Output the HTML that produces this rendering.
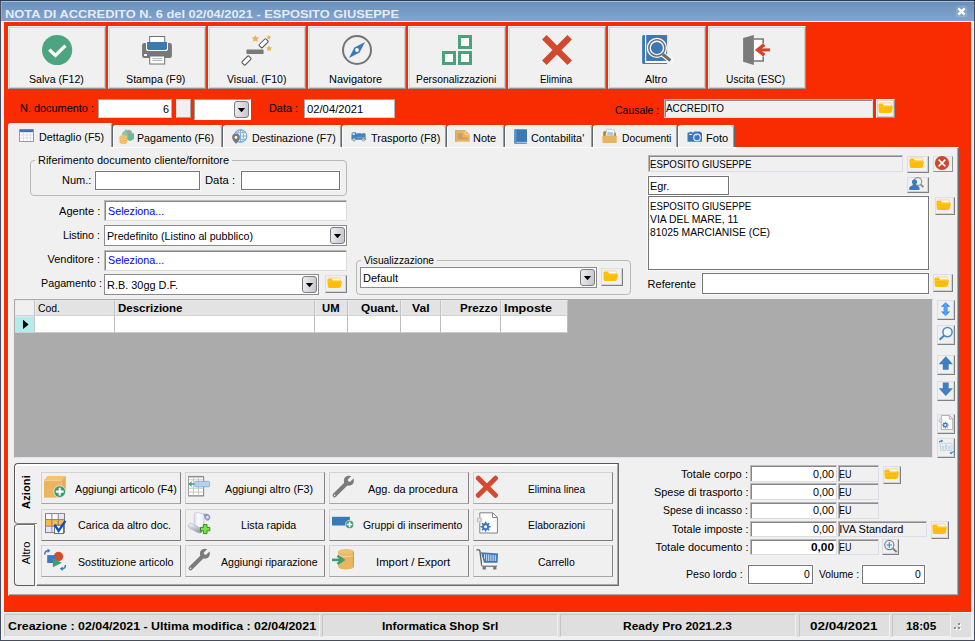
<!DOCTYPE html>
<html><head><meta charset="utf-8"><title>Nota di accredito</title>
<style>
html,body{margin:0;padding:0}
body{width:975px;height:641px;position:relative;overflow:hidden;background:#f82c00;font-family:"Liberation Sans",sans-serif;font-size:11px}
body div,body svg{position:absolute;box-sizing:border-box}
.t{white-space:nowrap;line-height:14px;height:14px;transform-origin:0 0}

.tb{background:#f0f0f0;border-top:1px solid #f0f8fa;border-left:1px solid #f0f8fa;border-right:1px solid #8c9698;border-bottom:1px solid #8c9698;box-shadow:inset -1px -1px 0 #cfd2d3,inset 1px 1px 0 #d6d6dc}
.btn{background:#f0f0f0;border-top:1px solid #dcdee6;border-left:1px solid #dcdee6;border-right:1px solid #7e8286;border-bottom:1px solid #7e8286;box-shadow:inset -1px -1px 0 #d4d4d6}
.btn2{background:#f0f0f0;border-top:1px solid #dcdee6;border-left:1px solid #dcdee6;border-right:1px solid #8e9296;border-bottom:1px solid #8e9296}
.ab{background:#f0f0f0;border-top:1px solid #d2d2d8;border-left:1px solid #d2d2d8;border-right:1px solid #848484;border-bottom:1px solid #a4a4a4}
.in{background:#fff;border-top:1px solid #b8b8b8;border-left:1px solid #b8b8b8;border-right:1px solid #dcdce0;border-bottom:1px solid #dcdce0;box-shadow:inset 1px 1px 0 #868686}
.in2{background:#fff;border:1px solid;border-color:#9e9e9e #b4b4b4 #d4d4d4 #a6a6a6}
.ro{background:#f0f0f0;border-top:1px solid #b4b4b4;border-left:1px solid #b4b4b4;border-right:1px solid #dcdce6;border-bottom:1px solid #dcdce6;box-shadow:inset 1px 1px 0 #8a8a8a}
.fl{background:#fff;border:1px solid #767676;box-shadow:0 0 0 1px rgba(255,255,255,.6)}
.cb{background:#fff;border:1px solid #8c8c8c}
.dd{background:linear-gradient(100deg,#eeeef2,#c4c4cc);border:1px solid #7c7c7c;border-radius:3px}
.dd:after{content:"";position:absolute;left:2.7px;top:5.8px;width:7.6px;height:4.4px;background:#000;clip-path:polygon(0 0,100% 0,50% 100%)}
.gb{border:1px solid #b8b8b8;border-radius:4px}
.tab{background:#f0f0f0;border-top:1px solid #fff;border-left:1px solid #fff;border-right:1px solid #5e6a70;border-radius:3px 3px 0 0;box-shadow:inset -1px 0 0 #98a0a4}
.sp{background:#dfdfdf;border-top:1px solid #c6c6c6;border-left:1px solid #c6c6c6;border-right:1px solid #f2f2f2;border-bottom:1px solid #f2f2f2}
.hc{background:#e3e3e3;border-right:1px solid #c2c2c6;border-bottom:1px solid #d2d2d2;border-top:1px solid #e8e8e8;border-left:1px solid #ececec}
.gc{background:#fff;border-right:1px solid #bebebe;border-bottom:1px solid #cacaca}

</style></head><body>
<div class="" style="left:0px;top:0px;width:975px;height:641px;background:#464e5d;border-top:1px solid #2b3d55"></div>
<div class="" style="left:1px;top:1px;width:973px;height:639px;background:#f0f0f0"></div>
<div class="" style="left:1px;top:1px;width:973px;height:20px;background:linear-gradient(#6a90bc,#81a5cd);border-top:1px solid #a8c1dd;border-left:1px solid #8fadd0"></div>
<div class="" style="left:4px;top:22px;width:967px;height:590px;background:#f82c00"></div>
<div class="t" style="left:4.50px;top:6.62px;font-size:11.5px;color:#e6ebf2;transform:scaleX(1.1176);font-weight:bold;">NOTA DI ACCREDITO N. 6 del 02/04/2021 - ESPOSITO GIUSEPPE</div>
<div class="" style="left:956px;top:6px;width:11px;height:11px;background:rgba(255,255,255,.07);border:1px solid rgba(255,255,255,.13);border-radius:1px"></div>
<svg style="left:956px;top:6px" width="12" height="12" viewBox="956 6 12 12"><path d="M958.3 8.3 L964.7 14.7 M964.7 8.3 L958.3 14.7" stroke="#fff" stroke-width="2.4"/></svg>
<div class="tb" style="left:8px;top:26px;width:98px;height:63px;"></div>
<div class="t" style="left:28.60px;top:72.19px;font-size:11px;color:#000;transform:scaleX(0.9640);">Salva (F12)</div>
<svg style="left:40px;top:32px" width="36" height="36" viewBox="40 32 36 36"><circle cx="57.1" cy="50" r="15.1" fill="#4ca57f"/><path d="M49.3 49.6 L55.4 55.4 L65.4 45.6" fill="none" stroke="#fff" stroke-width="3.3"/></svg>
<div class="tb" style="left:108px;top:26px;width:98px;height:63px;"></div>
<div class="t" style="left:126.00px;top:72.19px;font-size:11px;color:#000;transform:scaleX(0.9718);">Stampa (F9)</div>
<svg style="left:140px;top:32px" width="36" height="36" viewBox="140 32 36 36"><rect x="149.7" y="36.5" width="15" height="7" fill="#fff" stroke="#707070" stroke-width="1"/><rect x="142.1" y="43" width="29.8" height="15" rx="2.2" fill="#787878"/><path d="M146 42 H168 V49 Q168 51 166 51 H148 Q146 51 146 49 Z" fill="#fbfbfb"/><path d="M147 42 H167 V48.5 L165.6 50 H148.4 L147 48.5 Z" fill="#3e79b4"/><rect x="144" y="54" width="3" height="2" rx=".6" fill="#fff"/><rect x="149.7" y="56" width="15" height="8" fill="#fff" stroke="#707070" stroke-width="1"/><path d="M152.3 58.6 H162 M152.3 60.6 H162" stroke="#b0b0b0" stroke-width="1"/></svg>
<div class="tb" style="left:208px;top:26px;width:98px;height:63px;"></div>
<div class="t" style="left:227.00px;top:72.19px;font-size:11px;color:#000;transform:scaleX(0.9558);">Visual. (F10)</div>
<svg style="left:240px;top:32px" width="36" height="36" viewBox="240 32 36 36"><rect x="246.4" y="49.6" width="17.2" height="4.5" rx=".8" fill="#7a7a7a"/><g transform="rotate(-45 263.6 43.3)"><rect x="258.9" y="41.1" width="9.4" height="4.4" rx=".8" fill="#fff" stroke="#4d4d4d" stroke-width="1"/></g><g transform="rotate(-45 246.5 60.5)"><rect x="241.8" y="58.3" width="9.4" height="4.4" rx=".8" fill="#fff" stroke="#4d4d4d" stroke-width="1"/></g><polygon points="255.40,34.90 256.59,37.16 259.11,37.59 257.33,39.43 257.69,41.96 255.40,40.83 253.11,41.96 253.47,39.43 251.69,37.59 254.21,37.16" fill="#f0b254"/><polygon points="268.80,34.90 269.56,36.35 271.18,36.63 270.04,37.80 270.27,39.42 268.80,38.70 267.33,39.42 267.56,37.80 266.42,36.63 268.04,36.35" fill="#f0b254"/><polygon points="269.10,45.30 270.08,47.15 272.14,47.51 270.68,49.01 270.98,51.09 269.10,50.16 267.22,51.09 267.52,49.01 266.06,47.51 268.12,47.15" fill="#f0b254"/></svg>
<div class="tb" style="left:308px;top:26px;width:98px;height:63px;"></div>
<div class="t" style="left:329.00px;top:72.19px;font-size:11px;color:#000;">Navigatore</div>
<svg style="left:340px;top:32px" width="36" height="36" viewBox="340 32 36 36"><circle cx="357" cy="50" r="14" fill="none" stroke="#747474" stroke-width="2"/><path d="M365 42 L359.6 52.4 L349 58 L354.4 47.6 Z" fill="#3b78bd"/><circle cx="357" cy="50" r="1.9" fill="#fff"/></svg>
<div class="tb" style="left:408px;top:26px;width:98px;height:63px;"></div>
<div class="t" style="left:416.30px;top:72.19px;font-size:11px;color:#000;transform:scaleX(0.9381);">Personalizzazioni</div>
<svg style="left:440px;top:32px" width="36" height="36" viewBox="440 32 36 36"><g fill="#fdfdfd" stroke="#4ca27d" stroke-width="3"><rect x="459.5" y="36.5" width="11" height="11"/><rect x="443.5" y="52.5" width="11" height="11"/><rect x="459.5" y="52.5" width="11" height="11"/></g></svg>
<div class="tb" style="left:508px;top:26px;width:98px;height:63px;"></div>
<div class="t" style="left:540.40px;top:72.19px;font-size:11px;color:#000;transform:scaleX(0.8956);">Elimina</div>
<svg style="left:540px;top:32px" width="36" height="36" viewBox="540 32 36 36"><path d="M544.3 37.3 L569.7 62.7 M569.7 37.3 L544.3 62.7" stroke="#d04a2f" stroke-width="6.4"/></svg>
<div class="tb" style="left:608px;top:26px;width:98px;height:63px;"></div>
<div class="t" style="left:644.70px;top:72.19px;font-size:11px;color:#000;">Altro</div>
<svg style="left:640px;top:32px" width="36" height="36" viewBox="640 32 36 36"><path d="M643.6 35 H667.1 V64.1 H643.6 Q642.1 64.1 642.1 62.6 V36.5 Q642.1 35 643.6 35 Z" fill="#3d78b6"/><path d="M645.6 35 V61.9" fill="none" stroke="#fafafa" stroke-width="1.2"/><path d="M645 62 H667.1" fill="none" stroke="#fafafa" stroke-width="2.1"/><path d="M662.6 54.2 L670.6 60.6" stroke="#fafafa" stroke-width="5.4" stroke-linecap="round"/><circle cx="656.9" cy="47.9" r="8.1" fill="#3d78b6" stroke="#fafafa" stroke-width="4.2"/><circle cx="656.9" cy="47.9" r="8.1" fill="none" stroke="#6e6e6e" stroke-width="1.5"/><path d="M662.8 54.3 L670.4 60.5" stroke="#6e6e6e" stroke-width="3.1"/></svg>
<div class="tb" style="left:708px;top:26px;width:98px;height:63px;"></div>
<div class="t" style="left:726.40px;top:72.19px;font-size:11px;color:#000;transform:scaleX(0.9298);">Uscita (ESC)</div>
<svg style="left:740px;top:32px" width="36" height="36" viewBox="740 32 36 36"><rect x="754" y="38.4" width="9.9" height="23.3" fill="#fff"/><path d="M754 39.1 H763.2 V43.6 M763.2 56.4 V60.9 H754" fill="none" stroke="#757575" stroke-width="1.5"/><path d="M743.1 38 L753.9 35 V64.9 L743.1 61.8 Z" fill="#7a7a7a"/><path d="M757.5 49.9 H770.1" stroke="#d6432a" stroke-width="3"/><path d="M764.3 44.6 L757.6 49.9 L764.3 55.2" fill="none" stroke="#d6432a" stroke-width="3.4"/></svg>
<div class="t" style="left:20.00px;top:101.19px;font-size:11px;color:#000;transform:scaleX(0.9921);">N. documento :</div>
<div class="in2" style="left:98px;top:99px;width:74px;height:19px;"></div>
<div class="t" style="left:163.00px;top:102.19px;font-size:11px;color:#000;transform:scaleX(0.9809);">6</div>
<div class="btn" style="left:176px;top:99px;width:15px;height:19px;border-color:#e0e0e0 #a4a4a4 #a4a4a4 #e0e0e0;box-shadow:none"></div>
<div class="cb" style="left:194px;top:99px;width:57px;height:21px;border-color:#9c9c9c #fff #fff #9c9c9c;box-shadow:none"></div>
<div class="dd" style="left:234px;top:101px;width:15px;height:17px;"></div>
<div class="t" style="left:269.00px;top:101.19px;font-size:11px;color:#000;transform:scaleX(0.9882);">Data :</div>
<div class="in2" style="left:304px;top:99px;width:91px;height:19px;"></div>
<div class="t" style="left:306.75px;top:102.19px;font-size:11px;color:#000;transform:scaleX(1.0218);">02/04/2021</div>
<div class="t" style="left:614.80px;top:103.19px;font-size:11px;color:#000;transform:scaleX(0.9512);">Causale :</div>
<div class="ro" style="left:664px;top:99px;width:209px;height:19px;"></div>
<div class="t" style="left:666.00px;top:101.19px;font-size:11px;color:#000;transform:scaleX(0.8981);">ACCREDITO</div>
<div class="tb" style="left:876px;top:99px;width:19px;height:19px;"></div>
<svg style="left:878.4px;top:101.7px" width="16" height="12" viewBox="0 0 16 12"><path d="M1 1.6 Q1 .3 2.3 .3 H12.4 Q13.7 .3 13.7 1.6 V5 H1 Z" fill="#ffd79e"/><path d="M5.4 1.6 H12.8 V4.4 H5.4 Z" fill="#fff"/><path d="M.4 3 Q.4 1.9 1.5 1.9 H4.1 Q4.8 1.9 5.2 2.5 L5.9 3.6 H13.4 Q15 3.6 14.8 5.2 L13.9 9.6 Q13.6 11 12.2 11 H2.3 Q1 11 .8 9.7 Z" fill="#ffbd05"/><path d="M1.2 4.4 H13.8" stroke="#ffc933" stroke-width=".8"/></svg>
<div class="tab" style="left:8px;top:123px;width:105px;height:25px;"></div>
<div class="t" style="left:39.00px;top:130.19px;font-size:11px;color:#000;transform:scaleX(0.9756);">Dettaglio (F5)</div>
<svg style="left:18px;top:128px" width="18" height="16" viewBox="18 128 18 16"><rect x="19.5" y="129.5" width="14" height="12" fill="#fff" stroke="#9a9a9a"/><rect x="20" y="129.6" width="13" height="2.6" fill="#3a74b5"/><path d="M20 135 H33 M20 138 H33 M23.5 132 V141 M27 132 V141 M30.5 132 V141" stroke="#dcdcdc" stroke-width="1"/></svg>
<div class="tab" style="left:113px;top:125px;width:110px;height:22px;"></div>
<div class="t" style="left:137.00px;top:131.19px;font-size:11px;color:#000;transform:scaleX(0.9689);">Pagamento (F6)</div>
<svg style="left:117px;top:127px" width="20" height="18" viewBox="117 127 20 18"><path d="M122 133 L126 129.3 L130 131.5 L134 134 V139 L130 141 L122.5 137 Z" fill="#86c9ad"/><path d="M126.2 131.6 L129.3 129.6 L132.2 131.4 L129.4 136 Z" fill="#9a9a9a" opacity=".75"/><path d="M127.6 134.5 L134 133.2 V139 L130 141 L127.6 139.7 Z" fill="#69b896"/><path d="M119.5 137 V141.5 A3.9 2.3 0 0 0 127.3 141.5 V137 Z" fill="#eeb04e"/><ellipse cx="123.4" cy="137" rx="3.9" ry="2.1" fill="#f4c068"/><path d="M120.3 139.4 Q123.4 141 126.6 139.4 M120.3 141.6 Q123.4 143.2 126.6 141.6" stroke="#f8dca0" stroke-width=".8" fill="none"/></svg>
<div class="tab" style="left:223px;top:125px;width:119px;height:22px;"></div>
<div class="t" style="left:251.50px;top:131.19px;font-size:11px;color:#000;transform:scaleX(0.9642);">Destinazione (F7)</div>
<svg style="left:230px;top:128px" width="20" height="18" viewBox="230 128 20 18"><circle cx="240.5" cy="136" r="6.3" fill="#f4f8fd" stroke="#6fa3d8" stroke-width="1.1"/><path d="M234.3 136 H246.7 M240.5 129.8 V142.2 M235.3 132.7 H245.7 M235.3 139.3 H245.7" stroke="#7aaade" stroke-width=".9"/><ellipse cx="240.5" cy="136" rx="3.1" ry="6.2" fill="none" stroke="#7aaade" stroke-width=".9"/><path d="M236 143.8 Q232.1 139.6 232.1 137.4 A3.9 3.9 0 0 1 239.9 137.4 Q239.9 139.6 236 143.8 Z" fill="#7a7a7a"/><circle cx="236" cy="137.4" r="1.35" fill="#fff"/></svg>
<div class="tab" style="left:342px;top:125px;width:105px;height:22px;"></div>
<div class="t" style="left:370.70px;top:131.19px;font-size:11px;color:#000;transform:scaleX(0.9917);">Trasporto (F8)</div>
<svg style="left:350px;top:130px" width="18" height="12" viewBox="350 130 18 12"><path d="M351.5 134.2 Q351.5 132.3 353.4 132.3 H355.2 Q356.4 132.3 356.4 133.5 V134 H357 V133.3 H361.3 V134 H361.9 V133.3 H365.3 V134 H365.6 V138.2 Q366.3 138.4 366.3 139 Q366.3 139.8 365.6 139.8 H351.9 Q351.4 139.8 351.4 139.2 Z" fill="#4481c0"/><ellipse cx="353.7" cy="134.1" rx="1.4" ry=".8" fill="#fff"/><path d="M356.7 137.4 H365.4" stroke="#8fb6df" stroke-width=".7"/><circle cx="354" cy="139.6" r="1.5" fill="#c8c8c8" stroke="#8a8a8a" stroke-width=".6"/><circle cx="363.5" cy="139.6" r="1.5" fill="#c8c8c8" stroke="#8a8a8a" stroke-width=".6"/></svg>
<div class="tab" style="left:447px;top:125px;width:58px;height:22px;"></div>
<div class="t" style="left:473.20px;top:131.19px;font-size:11px;color:#000;transform:scaleX(0.9942);">Note</div>
<svg style="left:454px;top:129px" width="18" height="14" viewBox="454 129 18 14"><path d="M455.4 130.4 H465.6 L469.8 134.3 V141.8 H455.4 Z" fill="#edb55c"/><path d="M455.7 130.4 V141.8" stroke="#b8955a" stroke-width=".7"/><path d="M455.4 130.6 H465.6" stroke="#b8955a" stroke-width=".6"/><path d="M465.3 130.6 V134.5 H469.6" fill="none" stroke="#f6d9a4" stroke-width=".9"/><path d="M457.6 133.3 H462.6 V137.4 H467.6 V139.6 H457.6 Z" fill="#c3a068"/></svg>
<div class="tab" style="left:505px;top:125px;width:88px;height:22px;"></div>
<div class="t" style="left:531.40px;top:131.19px;font-size:11px;color:#000;transform:scaleX(0.9838);">Contabilita'</div>
<svg style="left:513px;top:128px" width="16" height="17" viewBox="513 128 16 17"><rect x="514.3" y="129.2" width="12.7" height="14.6" rx=".8" fill="#3d78b3"/><rect x="514.4" y="129.6" width="2.1" height="13.8" fill="#5e92c6"/><path d="M516.4 142.4 H527" stroke="#a9c3de" stroke-width="1.1"/></svg>
<div class="tab" style="left:593px;top:125px;width:85px;height:22px;"></div>
<div class="t" style="left:621.50px;top:131.19px;font-size:11px;color:#000;transform:scaleX(0.9377);">Documenti</div>
<svg style="left:601px;top:128px" width="18" height="16" viewBox="601 128 18 16"><path d="M603.3 132 Q603.3 131.2 604.2 131.2 H606 L606.6 132.4 H615 Q615.9 132.4 615.9 133.3 V136.5 H603.3 Z" fill="#a38632"/><g transform="rotate(9 610 132.5)"><rect x="606.2" y="129.5" width="8.2" height="7" rx=".8" fill="#fdfdfd" stroke="#a8a8a8" stroke-width=".6"/><rect x="607.4" y="131.8" width="5.8" height="4" fill="#aac8e8"/></g><rect x="602.4" y="135.8" width="14.4" height="7.1" rx=".6" fill="#e9b45f"/></svg>
<div class="tab" style="left:678px;top:125px;width:57px;height:22px;"></div>
<div class="t" style="left:706.00px;top:131.19px;font-size:11px;color:#000;transform:scaleX(1.0132);">Foto</div>
<svg style="left:686px;top:130px" width="18" height="13" viewBox="686 130 18 13"><path d="M687.5 133.4 Q687.5 132.6 688.3 132.6 H689.6 L690.2 131.7 H691.5 L692.1 132.6 H693.5 L694.6 131.4 H700 L701.2 132.6 Q702 132.8 702 133.6 V141.8 H687.5 Z" fill="#3b77b5"/><circle cx="697" cy="137.4" r="3.3" fill="none" stroke="#e6eef7" stroke-width="1.1"/><path d="M695.4 136 L697 134.9" stroke="#c8daee" stroke-width=".7"/><ellipse cx="690.6" cy="134.4" rx="1.5" ry=".6" fill="#fff"/></svg>
<div class="" style="left:8px;top:147px;width:951px;height:449px;background:#f0f0f0;border-top:1px solid #fff;border-left:1px solid #fff;border-right:1px solid #6a6e70;border-bottom:1px solid #6a6e70;box-shadow:inset -1px -1px 0 #a8a8a8"></div>
<div class="" style="left:9px;top:146px;width:102px;height:3px;background:#f0f0f0"></div>
<div class="gb" style="left:30px;top:160px;width:317px;height:36px;"></div>
<div class="" style="left:35px;top:154px;width:197px;height:14px;background:#f0f0f0"></div>
<div class="t" style="left:38.00px;top:153.19px;font-size:11px;color:#000;transform:scaleX(0.9949);">Riferimento documento cliente/fornitore</div>
<div class="t" style="left:62.00px;top:173.19px;font-size:11px;color:#000;">Num.:</div>
<div class="fl" style="left:95px;top:171px;width:105px;height:19px;"></div>
<div class="t" style="left:205.00px;top:173.19px;font-size:11px;color:#000;transform:scaleX(1.0223);">Data :</div>
<div class="fl" style="left:241px;top:171px;width:99px;height:19px;"></div>
<div class="t" style="left:58.75px;top:204.19px;font-size:11px;color:#000;transform:scaleX(1.0068);">Agente :</div>
<div class="in" style="left:104px;top:200px;width:243px;height:21px;"></div>
<div class="t" style="left:107.60px;top:204.19px;font-size:11px;color:#0000ff;transform:scaleX(0.9769);">Seleziona...</div>
<div class="t" style="left:63.00px;top:228.19px;font-size:11px;color:#000;transform:scaleX(0.9761);">Listino :</div>
<div class="cb" style="left:104px;top:225px;width:243px;height:21px;"></div>
<div class="t" style="left:107.00px;top:228.69px;font-size:11px;color:#000;transform:scaleX(0.9707);">Predefinito (Listino al pubblico)</div>
<div class="dd" style="left:330px;top:227px;width:15px;height:17px;"></div>
<div class="t" style="left:47.50px;top:252.19px;font-size:11px;color:#000;">Venditore :</div>
<div class="in" style="left:104px;top:250px;width:243px;height:21px;"></div>
<div class="t" style="left:107.60px;top:253.19px;font-size:11px;color:#0000ff;transform:scaleX(0.9769);">Seleziona...</div>
<div class="t" style="left:41.00px;top:276.19px;font-size:11px;color:#000;transform:scaleX(0.9780);">Pagamento :</div>
<div class="cb" style="left:104px;top:274px;width:215px;height:21px;"></div>
<div class="t" style="left:107.00px;top:277.69px;font-size:11px;color:#000;transform:scaleX(0.9926);">R.B. 30gg D.F.</div>
<div class="dd" style="left:302px;top:276px;width:15px;height:17px;"></div>
<div class="btn" style="left:325px;top:275px;width:22px;height:18px;"></div>
<svg style="left:326.9px;top:276.8px" width="16" height="12" viewBox="0 0 16 12"><path d="M1 1.6 Q1 .3 2.3 .3 H12.4 Q13.7 .3 13.7 1.6 V5 H1 Z" fill="#ffd79e"/><path d="M5.4 1.6 H12.8 V4.4 H5.4 Z" fill="#fff"/><path d="M.4 3 Q.4 1.9 1.5 1.9 H4.1 Q4.8 1.9 5.2 2.5 L5.9 3.6 H13.4 Q15 3.6 14.8 5.2 L13.9 9.6 Q13.6 11 12.2 11 H2.3 Q1 11 .8 9.7 Z" fill="#ffbd05"/><path d="M1.2 4.4 H13.8" stroke="#ffc933" stroke-width=".8"/></svg>
<div class="gb" style="left:356px;top:260px;width:275px;height:35px;"></div>
<div class="" style="left:361px;top:254px;width:76px;height:14px;background:#f0f0f0"></div>
<div class="t" style="left:364.00px;top:252.94px;font-size:11px;color:#000;transform:scaleX(0.9257);">Visualizzazione</div>
<div class="cb" style="left:360px;top:267px;width:237px;height:21px;"></div>
<div class="t" style="left:363.25px;top:270.94px;font-size:11px;color:#000;transform:scaleX(1.0043);">Default</div>
<div class="dd" style="left:580px;top:269px;width:15px;height:17px;"></div>
<div class="btn" style="left:601px;top:268px;width:22px;height:18px;"></div>
<svg style="left:603.1px;top:269.9px" width="16" height="12" viewBox="0 0 16 12"><path d="M1 1.6 Q1 .3 2.3 .3 H12.4 Q13.7 .3 13.7 1.6 V5 H1 Z" fill="#ffd79e"/><path d="M5.4 1.6 H12.8 V4.4 H5.4 Z" fill="#fff"/><path d="M.4 3 Q.4 1.9 1.5 1.9 H4.1 Q4.8 1.9 5.2 2.5 L5.9 3.6 H13.4 Q15 3.6 14.8 5.2 L13.9 9.6 Q13.6 11 12.2 11 H2.3 Q1 11 .8 9.7 Z" fill="#ffbd05"/><path d="M1.2 4.4 H13.8" stroke="#ffc933" stroke-width=".8"/></svg>
<div class="ro" style="left:648px;top:155px;width:255px;height:17px;"></div>
<div class="t" style="left:649.50px;top:156.94px;font-size:11px;color:#000;transform:scaleX(0.8800);">ESPOSITO GIUSEPPE</div>
<div class="btn" style="left:907px;top:156px;width:22px;height:17px;"></div>
<svg style="left:909.1px;top:156.8px" width="16" height="12" viewBox="0 0 16 12"><path d="M1 1.6 Q1 .3 2.3 .3 H12.4 Q13.7 .3 13.7 1.6 V5 H1 Z" fill="#ffd79e"/><path d="M5.4 1.6 H12.8 V4.4 H5.4 Z" fill="#fff"/><path d="M.4 3 Q.4 1.9 1.5 1.9 H4.1 Q4.8 1.9 5.2 2.5 L5.9 3.6 H13.4 Q15 3.6 14.8 5.2 L13.9 9.6 Q13.6 11 12.2 11 H2.3 Q1 11 .8 9.7 Z" fill="#ffbd05"/><path d="M1.2 4.4 H13.8" stroke="#ffc933" stroke-width=".8"/></svg>
<div class="btn2" style="left:933px;top:156px;width:20px;height:16px;"></div>
<svg style="left:934px;top:154.9px" width="16" height="16" viewBox="934 154.9 16 16"><circle cx="942" cy="162.9" r="7.1" fill="#cb492d"/><path d="M938.6 159.5 L945.4 166.3 M945.4 159.5 L938.6 166.3" stroke="#fff" stroke-width="1.5"/></svg>
<div class="fl" style="left:648px;top:176px;width:81px;height:19px;"></div>
<div class="t" style="left:650.40px;top:179.19px;font-size:11px;color:#000;transform:scaleX(0.9915);">Egr.</div>
<div class="btn" style="left:907px;top:177px;width:22px;height:16px;"></div>
<svg style="left:908px;top:177px" width="18" height="15" viewBox="908 177 18 15"><circle cx="917.8" cy="181.5" r="3.9" fill="none" stroke="#969696" stroke-width="1.1"/><path d="M920.6 184.4 L923.5 187.1" stroke="#8a8a8a" stroke-width="1.9"/><ellipse cx="914.5" cy="182" rx="2.55" ry="2.45" fill="#3b78bf"/><path d="M909.1 189 Q909.1 186.4 912.4 185.6 L913 183.6 H916 L916.6 185.6 Q919.7 186.4 919.7 189 Q919.7 190.1 918.4 190.1 H910.4 Q909.1 190.1 909.1 189 Z" fill="#3b78bf"/></svg>
<div class="fl" style="left:648px;top:196px;width:281px;height:74px;"></div>
<div class="t" style="left:650.40px;top:199.19px;font-size:11px;color:#000;transform:scaleX(0.8783);">ESPOSITO GIUSEPPE</div>
<div class="t" style="left:650.40px;top:212.19px;font-size:11px;color:#000;transform:scaleX(0.9429);">VIA DEL MARE, 11</div>
<div class="t" style="left:650.40px;top:225.19px;font-size:11px;color:#000;transform:scaleX(0.9393);">81025 MARCIANISE (CE)</div>
<div class="btn" style="left:935px;top:197px;width:20px;height:18px;"></div>
<svg style="left:936.1px;top:198.8px" width="16" height="12" viewBox="0 0 16 12"><path d="M1 1.6 Q1 .3 2.3 .3 H12.4 Q13.7 .3 13.7 1.6 V5 H1 Z" fill="#ffd79e"/><path d="M5.4 1.6 H12.8 V4.4 H5.4 Z" fill="#fff"/><path d="M.4 3 Q.4 1.9 1.5 1.9 H4.1 Q4.8 1.9 5.2 2.5 L5.9 3.6 H13.4 Q15 3.6 14.8 5.2 L13.9 9.6 Q13.6 11 12.2 11 H2.3 Q1 11 .8 9.7 Z" fill="#ffbd05"/><path d="M1.2 4.4 H13.8" stroke="#ffc933" stroke-width=".8"/></svg>
<div class="t" style="left:647.60px;top:276.89px;font-size:11px;color:#000;">Referente</div>
<div class="fl" style="left:702px;top:273px;width:227px;height:21px;"></div>
<div class="btn" style="left:933px;top:274px;width:20px;height:18px;"></div>
<svg style="left:934.2px;top:275.9px" width="16" height="12" viewBox="0 0 16 12"><path d="M1 1.6 Q1 .3 2.3 .3 H12.4 Q13.7 .3 13.7 1.6 V5 H1 Z" fill="#ffd79e"/><path d="M5.4 1.6 H12.8 V4.4 H5.4 Z" fill="#fff"/><path d="M.4 3 Q.4 1.9 1.5 1.9 H4.1 Q4.8 1.9 5.2 2.5 L5.9 3.6 H13.4 Q15 3.6 14.8 5.2 L13.9 9.6 Q13.6 11 12.2 11 H2.3 Q1 11 .8 9.7 Z" fill="#ffbd05"/><path d="M1.2 4.4 H13.8" stroke="#ffc933" stroke-width=".8"/></svg>
<div class="" style="left:14px;top:299px;width:919px;height:159px;background:#ababab;border-top:1px solid #a9a9a9;border-left:1px solid #a9a9a9;border-right:1px solid #e2e2ea;border-bottom:1px solid #e2e2ea"></div>
<div class="hc" style="left:15px;top:300px;width:20px;height:16px;background:#f0f0f0"></div>
<div class="gc" style="left:15px;top:316px;width:20px;height:17px;"></div>
<div class="hc" style="left:35px;top:300px;width:80px;height:16px;"></div>
<div class="gc" style="left:35px;top:316px;width:80px;height:17px;"></div>
<div class="hc" style="left:115px;top:300px;width:200px;height:16px;"></div>
<div class="gc" style="left:115px;top:316px;width:200px;height:17px;"></div>
<div class="hc" style="left:315px;top:300px;width:33px;height:16px;"></div>
<div class="gc" style="left:315px;top:316px;width:33px;height:17px;"></div>
<div class="hc" style="left:348px;top:300px;width:53px;height:16px;"></div>
<div class="gc" style="left:348px;top:316px;width:53px;height:17px;"></div>
<div class="hc" style="left:401px;top:300px;width:40px;height:16px;"></div>
<div class="gc" style="left:401px;top:316px;width:40px;height:17px;"></div>
<div class="hc" style="left:441px;top:300px;width:60px;height:16px;"></div>
<div class="gc" style="left:441px;top:316px;width:60px;height:17px;"></div>
<div class="hc" style="left:501px;top:300px;width:67px;height:16px;"></div>
<div class="gc" style="left:501px;top:316px;width:67px;height:17px;"></div>
<div class="" style="left:15px;top:316px;width:20px;height:17px;background:#b4ecec;border-top:1px solid #e4e4e4;border-right:1px solid #c8c8c8;border-bottom:1px solid #d0d0d0"></div>
<svg style="left:22px;top:319px" width="8" height="11" viewBox="0 0 8 11"><path d="M1 0.7 L6.6 5.4 L1 10.1 Z" fill="#000"/></svg>
<div class="t" style="left:37.50px;top:300.94px;font-size:11px;color:#000;transform:scaleX(0.9469);">Cod.</div>
<div class="t" style="left:118.00px;top:300.94px;font-size:11px;color:#000;transform:scaleX(1.0447);font-weight:bold;">Descrizione</div>
<div class="t" style="left:322.00px;top:300.94px;font-size:11px;color:#000;transform:scaleX(1.0230);font-weight:bold;">UM</div>
<div class="t" style="left:360.75px;top:300.94px;font-size:11px;color:#000;transform:scaleX(1.0695);font-weight:bold;">Quant.</div>
<div class="t" style="left:411.75px;top:300.94px;font-size:11px;color:#000;transform:scaleX(1.1004);font-weight:bold;">Val</div>
<div class="t" style="left:460.00px;top:300.94px;font-size:11px;color:#000;transform:scaleX(1.0577);font-weight:bold;">Prezzo</div>
<div class="t" style="left:503.75px;top:300.94px;font-size:11px;color:#000;transform:scaleX(1.1382);font-weight:bold;">Imposte</div>
<div class="btn" style="left:937px;top:300px;width:18px;height:20px;"></div>
<svg style="left:938px;top:301px" width="16" height="17" viewBox="938 301 16 17"><defs><linearGradient id="ud" x1="0" x2="1"><stop offset="0" stop-color="#1a70e0"/><stop offset=".5" stop-color="#58a8ff"/><stop offset="1" stop-color="#1a70e0"/></linearGradient></defs><path d="M945.6 302 L950.2 306.7 H947.6 V311.6 H950.2 L945.6 316.3 L941 311.6 H943.6 V306.7 H941 Z" fill="url(#ud)"/></svg>
<div class="btn" style="left:937px;top:325px;width:18px;height:20px;"></div>
<svg style="left:938px;top:326px" width="16" height="17" viewBox="938 326 16 17"><path d="M944.4 335.2 L939.6 339.7" stroke="#4a86c6" stroke-width="2.2"/><circle cx="947.5" cy="332.1" r="4.6" fill="#f6f8fb" stroke="#4a88c8" stroke-width="1.5"/></svg>
<div class="btn" style="left:937px;top:355px;width:18px;height:20px;"></div>
<svg style="left:938px;top:355px" width="16" height="17" viewBox="938 355 16 17"><path d="M945.8 356.3 L953 364.2 H948.7 V369.7 H942.8 V364.2 H938.7 Z" fill="#3e7fc1"/></svg>
<div class="btn" style="left:937px;top:381px;width:18px;height:20px;"></div>
<svg style="left:938px;top:381px" width="16" height="17" viewBox="938 381 16 17"><path d="M945.8 396 L953 388.2 H948.7 V382.6 H942.8 V388.2 H938.7 Z" fill="#3e7fc1"/></svg>
<div class="btn" style="left:937px;top:414px;width:18px;height:20px;"></div>
<svg style="left:938px;top:414px" width="16" height="18" viewBox="938 414 16 18"><path d="M941.3 415.5 H949.4 L952.7 418.8 V429.6 H941.3 Z" fill="#fdfdfd" stroke="#a0a0a0" stroke-width=".8"/><path d="M949.3 415.6 V419 H952.6" fill="none" stroke="#a0a0a0" stroke-width=".8"/><polygon points="943.19,420.15 943.19,420.65 942.33,420.89 942.20,421.20 942.63,421.99 942.29,422.33 941.50,421.90 941.19,422.03 940.95,422.89 940.45,422.89 940.21,422.03 939.90,421.90 939.11,422.33 938.77,421.99 939.20,421.20 939.07,420.89 938.21,420.65 938.21,420.15 939.07,419.91 939.20,419.60 938.77,418.81 939.11,418.47 939.90,418.90 940.21,418.77 940.45,417.91 940.95,417.91 941.19,418.77 941.50,418.90 942.29,418.47 942.63,418.81 942.20,419.60 942.33,419.91" fill="#c2c2c2"/><circle cx="940.7" cy="420.4" r="0.8" fill="#f0f0f0"/><polygon points="948.58,424.78 948.58,425.42 947.45,425.75 947.28,426.16 947.85,427.19 947.39,427.65 946.36,427.08 945.95,427.25 945.62,428.38 944.98,428.38 944.65,427.25 944.24,427.08 943.21,427.65 942.75,427.19 943.32,426.16 943.15,425.75 942.02,425.42 942.02,424.78 943.15,424.45 943.32,424.04 942.75,423.01 943.21,422.55 944.24,423.12 944.65,422.95 944.98,421.82 945.62,421.82 945.95,422.95 946.36,423.12 947.39,422.55 947.85,423.01 947.28,424.04 947.45,424.45" fill="#3b78c0"/><circle cx="945.3" cy="425.1" r="1.1" fill="#fff"/></svg>
<div class="btn" style="left:937px;top:438px;width:18px;height:20px;"></div>
<svg style="left:938px;top:439px" width="17" height="17" viewBox="938 439 17 17"><rect x="940.4" y="443.2" width="5.3" height="7.4" rx=".8" fill="#e9f3fb" stroke="#c2c2c2" stroke-width=".7"/><rect x="946.6" y="443.2" width="5.3" height="7.4" rx=".8" fill="#e9f3fb" stroke="#c2c2c2" stroke-width=".7"/><rect x="941.7" y="445.6" width="2.6" height="4" fill="#b9dcf4"/><rect x="947.9" y="445.6" width="2.6" height="4" fill="#b9dcf4"/><path d="M939.2 442.4 Q939.8 440.6 942 440.8" fill="none" stroke="#3f80c4" stroke-width="1.2"/><path d="M941.2 439.6 L943.2 441 L941.2 442.4 Z" fill="#3f80c4"/><path d="M953.6 451 Q953.2 453 951 453" fill="none" stroke="#3f80c4" stroke-width="1.2"/><path d="M951.6 451.4 L949.4 453 L951.6 454.6 Z" fill="#3f80c4"/></svg>
<div class="" style="left:36px;top:463px;width:583px;height:123px;background:#f0f0f0;border-top:1px solid #585858;border-left:1px solid #fff;border-right:1px solid #6a6a6a;border-bottom:1px solid #6a6a6a;box-shadow:inset -1px -1px 0 #a8a8a8, inset 0 2px 0 #fff"></div>
<div class="" style="left:14px;top:463px;width:23px;height:61px;background:#f0f0f0;border-top:1px solid #585858;border-left:1px solid #585858;border-bottom:1px solid #8a8a8a;border-radius:4px 0 0 4px;box-shadow:inset 1px 2px 0 #fff"></div>
<div class="" style="left:14px;top:524px;width:21px;height:62px;background:#f0f0f0;border-top:1px solid #6e6e6e;border-left:1px solid #5c5c5c;border-bottom:1px solid #5c5c5c;border-right:1px solid #6a6a6a;border-radius:4px 0 0 4px;box-shadow:inset 1px 1px 0 #fff"></div>
<div class="t" style="left:-9px;top:485px;width:70px;text-align:center;font-weight:bold;transform-origin:50% 50%;transform:rotate(-90deg);letter-spacing:0.15px">Azioni</div>
<div class="t" style="left:-9.5px;top:546px;width:70px;text-align:center;transform-origin:50% 50%;transform:rotate(-90deg);letter-spacing:0px">Altro</div>
<div class="ab" style="left:41px;top:472px;width:140px;height:32px;border-bottom-color:#a6a6a6"></div>
<div class="t" style="left:74.50px;top:481.69px;font-size:11px;color:#000;transform:scaleX(0.9733);">Aggiungi articolo (F4)</div>
<svg style="left:43px;top:475px" width="25" height="25" viewBox="43 475 25 25"><path d="M44 480.2 L47.6 476 H65.8 L61.4 480.2 Z" fill="#f2c374"/><path d="M61.4 480.2 L65.8 476 V492 L61.4 497.6 Z" fill="#e6ad56"/><rect x="44" y="480.2" width="17.4" height="17.4" fill="#ebb560"/><path d="M44 480.4 H61.4" stroke="#f8d9a2" stroke-width=".7"/><circle cx="59.7" cy="491.6" r="5.9" fill="#3d9a70" stroke="#f0f0f0" stroke-width=".8"/><path d="M59.7 487.7 V495.5 M55.8 491.6 H63.6" stroke="#fff" stroke-width="2.1"/></svg>
<div class="ab" style="left:185px;top:472px;width:140px;height:32px;border-bottom-color:#a6a6a6"></div>
<div class="t" style="left:224.60px;top:481.69px;font-size:11px;color:#000;transform:scaleX(0.9726);">Aggiungi altro (F3)</div>
<svg style="left:187px;top:475px" width="25" height="23" viewBox="187 475 25 23"><rect x="188.5" y="476.8" width="15" height="19" fill="#fff" stroke="#a2a2a2" stroke-width="1"/><path d="M188 476.6 H204" stroke="#909090" stroke-width="1.4"/><path d="M188.4 495.9 H204 M203.7 477 V496" stroke="#8c8c8c" stroke-width="1"/><path d="M193.4 477 V495.5 M198.5 477 V495.5 M189 479.8 H203.5 M189 488.2 H203.5 M189 492 H203.5" stroke="#c4c4c4" stroke-width="1"/><path d="M188.2 484 L191.6 481.2 V483.2 H195 V484.8 H191.6 V486.8 Z" fill="#41a878"/><rect x="194.6" y="481.4" width="15" height="5.4" rx="1" fill="#b4d2ea" stroke="#7eb2d8" stroke-width=".9"/></svg>
<div class="ab" style="left:329px;top:472px;width:140px;height:32px;border-bottom-color:#a6a6a6"></div>
<div class="t" style="left:368.25px;top:481.69px;font-size:11px;color:#000;transform:scaleX(0.9917);">Agg. da procedura</div>
<svg style="left:331px;top:475px" width="25" height="24" viewBox="331 475 25 24"><path d="M334.6 495.3 L346.2 483.7" stroke="#7b7b7b" stroke-width="4.1" stroke-linecap="round"/><circle cx="348.9" cy="480.65" r="5" fill="#7b7b7b"/><path d="M349.5 480.1 l5.4 -5.4" stroke="#f0f0f0" stroke-width="3.3" stroke-linecap="round"/><circle cx="334.6" cy="495.3" r=".8" fill="#f4f4f4"/></svg>
<div class="ab" style="left:473px;top:472px;width:140px;height:32px;border-bottom-color:#a6a6a6"></div>
<div class="t" style="left:528.00px;top:481.69px;font-size:11px;color:#000;transform:scaleX(0.9140);">Elimina linea</div>
<svg style="left:475px;top:475px" width="24" height="24" viewBox="475 475 24 24"><path d="M478.3 478.2 L495.5 495.3 M495.5 478.2 L478.3 495.3" stroke="#d44a30" stroke-width="4.9" stroke-linecap="round"/></svg>
<div class="ab" style="left:41px;top:509px;width:140px;height:32px;border-bottom-color:#7c7c7c"></div>
<div class="t" style="left:78.25px;top:517.94px;font-size:11px;color:#000;transform:scaleX(0.9751);">Carica da altro doc.</div>
<svg style="left:44px;top:512px" width="24" height="23" viewBox="44 512 24 23"><rect x="45.5" y="513.6" width="19" height="19" fill="#fff" stroke="#808080" stroke-width="1"/><rect x="58.6" y="514.2" width="5.4" height="5.2" fill="#e6e6fa"/><rect x="46" y="526.6" width="5.4" height="5.4" fill="#e6e6fa"/><rect x="52.4" y="526.6" width="5.6" height="5.4" fill="#eeeefc"/><rect x="46" y="519.8" width="18" height="6.2" fill="#ffb845"/><path d="M51.9 513.6 V532.6 M58.2 513.6 V532.6 M45.5 519.6 H64.5 M45.5 526.2 H64.5" stroke="#808080" stroke-width="1"/><rect x="54.6" y="525.2" width="8.8" height="8.4" fill="#fff" stroke="#5a5a5a" stroke-width=".9"/><path d="M54.6 524.6 L58.6 530.8 L65.4 520.8" fill="none" stroke="#0a4fc0" stroke-width="2.4"/></svg>
<div class="ab" style="left:185px;top:509px;width:140px;height:32px;border-bottom-color:#7c7c7c"></div>
<div class="t" style="left:241.20px;top:517.94px;font-size:11px;color:#000;transform:scaleX(0.9725);">Lista rapida</div>
<svg style="left:187px;top:511px" width="25" height="24" viewBox="187 511 25 24"><defs><linearGradient id="sr" x1="0" y1="0" x2=".5" y2="1"><stop offset="0" stop-color="#fafaff"/><stop offset="1" stop-color="#9c9cb8"/></linearGradient><linearGradient id="sp" x1="0" x2="1"><stop offset="0" stop-color="#dcdcf2"/><stop offset=".35" stop-color="#fbfbff"/><stop offset="1" stop-color="#e4e4f4"/></linearGradient></defs><path d="M194.4 514 Q194.8 512.2 196.8 512.3 L205.4 514.2 Q203.6 518 203.8 523 L203.8 529 L194.2 526.4 Q194.4 519 194.4 514 Z" fill="url(#sp)" stroke="#c0c0e0" stroke-width=".7"/><path d="M203.8 514.4 Q207.8 513.2 209.6 515.8 Q210.8 518.8 208.4 520.2 Q206.2 520.6 205.2 518.8 Q204.6 516.4 203.8 514.4 Z" fill="#9c9cd2" stroke="#7c7cb4" stroke-width=".6"/><circle cx="207.3" cy="517.3" r="1.3" fill="#e6e6f8"/><path d="M189 524.2 Q190.4 522.8 192.4 523.8 L201.2 528.6 Q202.6 530.4 201.2 532.4 Q199.8 533.6 197.6 532.6 L189.2 528 Q187.4 526.2 189 524.2 Z" fill="url(#sr)" stroke="#aeaec8" stroke-width=".6"/><path d="M200.4 528.4 Q202.4 530.4 200.4 532.6" fill="none" stroke="#74748c" stroke-width="1.1"/><path d="M203.4 524.5 H207 V527.4 H209.8 V530.8 H207 V533.6 H203.4 V530.8 H200.5 V527.4 H203.4 Z" fill="#7be04a" stroke="#1f8a14" stroke-width=".9"/></svg>
<div class="ab" style="left:329px;top:509px;width:140px;height:32px;border-bottom-color:#7c7c7c"></div>
<div class="t" style="left:363.25px;top:517.94px;font-size:11px;color:#000;transform:scaleX(0.9494);">Gruppi di inserimento</div>
<svg style="left:331px;top:515px" width="24" height="15" viewBox="331 515 24 15"><rect x="332" y="516.8" width="17.9" height="8.7" fill="#3b78b8"/><circle cx="349.6" cy="524.5" r="4.1" fill="#3d9a70" stroke="#f0f0f0" stroke-width=".7"/><path d="M349.6 521.8 V527.2 M346.9 524.5 H352.3" stroke="#fff" stroke-width="1.7"/></svg>
<div class="ab" style="left:473px;top:509px;width:140px;height:32px;border-bottom-color:#7c7c7c"></div>
<div class="t" style="left:528.00px;top:517.94px;font-size:11px;color:#000;transform:scaleX(0.9416);">Elaborazioni</div>
<svg style="left:475px;top:511px" width="24" height="24" viewBox="475 511 24 24"><path d="M479.8 512.8 H492.8 L497.4 517.4 V533 H479.8 Z" fill="#fefefe" stroke="#808080" stroke-width="1"/><path d="M492.6 513 V517.6 H497.2" fill="none" stroke="#808080" stroke-width="1"/><polygon points="482.78,519.67 482.78,520.33 481.61,520.67 481.44,521.09 482.03,522.16 481.56,522.63 480.49,522.04 480.07,522.21 479.73,523.38 479.07,523.38 478.73,522.21 478.31,522.04 477.24,522.63 476.77,522.16 477.36,521.09 477.19,520.67 476.02,520.33 476.02,519.67 477.19,519.33 477.36,518.91 476.77,517.84 477.24,517.37 478.31,517.96 478.73,517.79 479.07,516.62 479.73,516.62 480.07,517.79 480.49,517.96 481.56,517.37 482.03,517.84 481.44,518.91 481.61,519.33" fill="#c6c6c6"/><circle cx="479.4" cy="520" r="1.1" fill="#f0f0f0"/><polygon points="490.77,526.19 490.77,527.21 488.98,527.73 488.72,528.37 489.62,530.00 488.90,530.72 487.27,529.82 486.63,530.08 486.11,531.87 485.09,531.87 484.57,530.08 483.93,529.82 482.30,530.72 481.58,530.00 482.48,528.37 482.22,527.73 480.43,527.21 480.43,526.19 482.22,525.67 482.48,525.03 481.58,523.40 482.30,522.68 483.93,523.58 484.57,523.32 485.09,521.53 486.11,521.53 486.63,523.32 487.27,523.58 488.90,522.68 489.62,523.40 488.72,525.03 488.98,525.67" fill="#3b78c0"/><circle cx="485.6" cy="526.7" r="1.5" fill="#fff"/></svg>
<div class="ab" style="left:41px;top:545px;width:140px;height:32px;border-bottom-color:#a6a6a6"></div>
<div class="t" style="left:77.50px;top:554.94px;font-size:11px;color:#000;transform:scaleX(0.9702);">Sostituzione articolo</div>
<svg style="left:43px;top:548px" width="25" height="25" viewBox="43 548 25 25"><circle cx="58.5" cy="556.5" r="4.7" fill="#d44a2a"/><rect x="47.2" y="555.1" width="8.2" height="7.9" fill="#3b78c0"/><path d="M52.9 558.2 V567.2 L61.9 562.7 Z" fill="#3d9e72"/><path d="M44.8 554.6 Q44.6 550.8 48.2 550.8" fill="none" stroke="#3b78c0" stroke-width="1.5"/><path d="M47.6 548.6 L50.4 550.8 L47.6 553 Z" fill="#3b78c0"/><path d="M65.4 565 Q65.6 568.8 62 568.8" fill="none" stroke="#3b78c0" stroke-width="1.5"/><path d="M62.6 566.6 L59.8 568.8 L62.6 571 Z" fill="#3b78c0"/></svg>
<div class="ab" style="left:185px;top:545px;width:140px;height:32px;border-bottom-color:#a6a6a6"></div>
<div class="t" style="left:221.00px;top:554.94px;font-size:11px;color:#000;transform:scaleX(0.9633);">Aggiungi riparazione</div>
<svg style="left:187px;top:548px" width="25" height="24" viewBox="187 548 25 24"><path d="M190.6 568.3 L202.2 556.7" stroke="#7b7b7b" stroke-width="4.1" stroke-linecap="round"/><circle cx="204.9" cy="553.65" r="5" fill="#7b7b7b"/><path d="M205.5 553.1 l5.4 -5.4" stroke="#f0f0f0" stroke-width="3.3" stroke-linecap="round"/><circle cx="190.6" cy="568.3" r=".8" fill="#f4f4f4"/></svg>
<div class="ab" style="left:329px;top:545px;width:140px;height:32px;border-bottom-color:#a6a6a6"></div>
<div class="t" style="left:376.25px;top:554.94px;font-size:11px;color:#000;transform:scaleX(1.0294);">Import / Export</div>
<svg style="left:331px;top:548px" width="25" height="23" viewBox="331 548 25 23"><path d="M338.1 551.6 V566.8 A7.95 2.7 0 0 0 354 566.8 V551.6 Z" fill="#eab560"/><ellipse cx="346.05" cy="551.6" rx="7.95" ry="2.6" fill="#efc070"/><path d="M338.2 552 A7.9 2.6 0 0 0 353.9 552" fill="none" stroke="#f8e3b8" stroke-width=".8" transform="translate(0 2.2)"/><path d="M353.4 552 V567" stroke="#d8a24c" stroke-width="1.2"/><path d="M332 559.9 H342" stroke="#3d9e72" stroke-width="2.6"/><path d="M337.4 555.8 L343.2 559.9 L337.4 564" fill="none" stroke="#3d9e72" stroke-width="2.6"/></svg>
<div class="ab" style="left:473px;top:545px;width:140px;height:32px;border-bottom-color:#a6a6a6"></div>
<div class="t" style="left:538.25px;top:554.94px;font-size:11px;color:#000;transform:scaleX(0.9543);">Carrello</div>
<svg style="left:475px;top:548px" width="25" height="23" viewBox="475 548 25 23"><path d="M476.4 549.8 H478.6 Q479.6 549.8 479.9 550.8 L481.6 564.6 Q481.8 566 483.2 566 H496.8" fill="none" stroke="#5e5e5e" stroke-width="1.3"/><path d="M481.8 563.4 H496.4 V565.4 H482.2 Z" fill="#fafafa"/><path d="M481 552.3 L498 553.4 L497.6 562.7 H484 Z" fill="#3b78c0"/><path d="M484.6 554 V559 M486.6 554.2 V561 M488.4 554.4 V561 M490.2 554.6 V561 M492 554.8 V561 M493.8 555 V561 M495.6 555.2 V561" stroke="#e8f0fa" stroke-width=".8"/><rect x="482.6" y="566.8" width="3.2" height="2.8" rx=".6" fill="#727272"/><rect x="493.2" y="566.8" width="3.2" height="2.8" rx=".6" fill="#727272"/></svg>
<div class="t" style="left:681.20px;top:467.19px;font-size:11px;color:#000;transform:scaleX(1.0146);">Totale corpo :</div>
<div class="in" style="left:750px;top:465px;width:87px;height:17px;"></div>
<div class="t" style="left:813.00px;top:467.19px;font-size:11px;color:#000;transform:scaleX(0.9810);">0,00</div>
<div class="ro" style="left:838px;top:465px;width:41px;height:17px;"></div>
<div class="t" style="left:839.25px;top:467.19px;font-size:11px;color:#000;transform:scaleX(0.8180);">EU</div>
<div class="t" style="left:653.70px;top:485.19px;font-size:11px;color:#000;transform:scaleX(0.9908);">Spese di trasporto :</div>
<div class="in" style="left:750px;top:483px;width:87px;height:17px;"></div>
<div class="t" style="left:813.00px;top:485.19px;font-size:11px;color:#000;transform:scaleX(0.9810);">0,00</div>
<div class="ro" style="left:838px;top:483px;width:41px;height:17px;"></div>
<div class="t" style="left:839.25px;top:485.19px;font-size:11px;color:#000;transform:scaleX(0.8180);">EU</div>
<div class="t" style="left:663.40px;top:503.19px;font-size:11px;color:#000;transform:scaleX(0.9499);">Spese di incasso :</div>
<div class="in" style="left:750px;top:502px;width:87px;height:17px;"></div>
<div class="t" style="left:813.00px;top:503.19px;font-size:11px;color:#000;transform:scaleX(0.9810);">0,00</div>
<div class="ro" style="left:838px;top:502px;width:41px;height:17px;"></div>
<div class="t" style="left:839.25px;top:503.19px;font-size:11px;color:#000;transform:scaleX(0.8180);">EU</div>
<div class="t" style="left:671.60px;top:521.89px;font-size:11px;color:#000;transform:scaleX(0.9944);">Totale imposte :</div>
<div class="in" style="left:750px;top:521px;width:87px;height:16px;"></div>
<div class="t" style="left:813.00px;top:521.89px;font-size:11px;color:#000;transform:scaleX(0.9810);">0,00</div>
<div class="ro" style="left:838px;top:521px;width:89px;height:16px;"></div>
<div class="t" style="left:839.25px;top:521.89px;font-size:11px;color:#000;">IVA Standard</div>
<div class="t" style="left:655.50px;top:539.69px;font-size:11px;color:#000;">Totale documento :</div>
<div class="in" style="left:750px;top:539px;width:87px;height:16px;"></div>
<div class="t" style="left:811.00px;top:539.69px;font-size:11px;color:#000;transform:scaleX(1.0744);font-weight:bold;">0,00</div>
<div class="ro" style="left:838px;top:539px;width:41px;height:16px;"></div>
<div class="t" style="left:839.25px;top:539.69px;font-size:11px;color:#000;transform:scaleX(0.8180);">EU</div>
<div class="btn" style="left:883px;top:466px;width:18px;height:18px;"></div>
<svg style="left:884.4px;top:467.8px" width="16" height="12" viewBox="0 0 16 12"><path d="M1 1.6 Q1 .3 2.3 .3 H12.4 Q13.7 .3 13.7 1.6 V5 H1 Z" fill="#ffd79e"/><path d="M5.4 1.6 H12.8 V4.4 H5.4 Z" fill="#fff"/><path d="M.4 3 Q.4 1.9 1.5 1.9 H4.1 Q4.8 1.9 5.2 2.5 L5.9 3.6 H13.4 Q15 3.6 14.8 5.2 L13.9 9.6 Q13.6 11 12.2 11 H2.3 Q1 11 .8 9.7 Z" fill="#ffbd05"/><path d="M1.2 4.4 H13.8" stroke="#ffc933" stroke-width=".8"/></svg>
<div class="btn" style="left:931px;top:521px;width:18px;height:18px;"></div>
<svg style="left:932.3px;top:522.7px" width="16" height="12" viewBox="0 0 16 12"><path d="M1 1.6 Q1 .3 2.3 .3 H12.4 Q13.7 .3 13.7 1.6 V5 H1 Z" fill="#ffd79e"/><path d="M5.4 1.6 H12.8 V4.4 H5.4 Z" fill="#fff"/><path d="M.4 3 Q.4 1.9 1.5 1.9 H4.1 Q4.8 1.9 5.2 2.5 L5.9 3.6 H13.4 Q15 3.6 14.8 5.2 L13.9 9.6 Q13.6 11 12.2 11 H2.3 Q1 11 .8 9.7 Z" fill="#ffbd05"/><path d="M1.2 4.4 H13.8" stroke="#ffc933" stroke-width=".8"/></svg>
<div class="btn" style="left:882px;top:539px;width:17px;height:16px;"></div>
<svg style="left:883px;top:539px" width="16" height="16" viewBox="883 539 16 16"><circle cx="889.3" cy="545" r="4.6" fill="#e9eef4" stroke="#7e7e7e" stroke-width="1.1"/><path d="M889.3 542.3 V547.7 M886.6 545 H892" stroke="#3f82cc" stroke-width="1.1"/><path d="M892.7 548.4 L896.6 552" stroke="#7a7a7a" stroke-width="1.9"/></svg>
<div class="t" style="left:686.40px;top:567.19px;font-size:11px;color:#000;transform:scaleX(0.9643);">Peso lordo :</div>
<div class="fl" style="left:748px;top:565px;width:65px;height:19px;"></div>
<div class="t" style="left:803.50px;top:567.44px;font-size:11px;color:#000;transform:scaleX(0.9400);">0</div>
<div class="t" style="left:818.50px;top:567.19px;font-size:11px;color:#000;transform:scaleX(0.9346);">Volume :</div>
<div class="fl" style="left:862px;top:565px;width:63px;height:19px;"></div>
<div class="t" style="left:915.25px;top:567.44px;font-size:11px;color:#000;transform:scaleX(0.9400);">0</div>
<div class="" style="left:4px;top:612px;width:967px;height:25px;background:#dedede;border-top:1px solid #e6f2f2"></div>
<div class="sp" style="left:4px;top:614px;width:316px;height:23px;"></div>
<div class="sp" style="left:322px;top:614px;width:236px;height:23px;"></div>
<div class="sp" style="left:560px;top:614px;width:236px;height:23px;"></div>
<div class="sp" style="left:799px;top:614px;width:91px;height:23px;"></div>
<div class="sp" style="left:892px;top:614px;width:59px;height:23px;"></div>
<div class="t" style="left:8.00px;top:619.19px;font-size:11px;color:#000;transform:scaleX(1.1245);font-weight:bold;">Creazione : 02/04/2021 - Ultima modifica : 02/04/2021</div>
<div class="t" style="left:382.00px;top:619.19px;font-size:11px;color:#000;transform:scaleX(1.0802);font-weight:bold;">Informatica Shop Srl</div>
<div class="t" style="left:623.30px;top:619.19px;font-size:11px;color:#000;transform:scaleX(1.0860);font-weight:bold;">Ready Pro 2021.2.3</div>
<div class="t" style="left:810.00px;top:619.19px;font-size:11px;color:#000;transform:scaleX(1.2244);font-weight:bold;">02/04/2021</div>
<div class="t" style="left:906.40px;top:619.19px;font-size:11px;color:#000;transform:scaleX(1.0736);font-weight:bold;">18:05</div>
<svg style="left:953px;top:622px" width="9" height="9" viewBox="953 622 9 9"><g fill="#fff"><rect x="959" y="624" width="2" height="2"/><rect x="955" y="628" width="2" height="2"/><rect x="959" y="628" width="2" height="2"/></g><g fill="#8c8c8c"><rect x="958" y="623" width="2" height="2"/><rect x="954" y="627" width="2" height="2"/><rect x="958" y="627" width="2" height="2"/></g></svg>
</body></html>
